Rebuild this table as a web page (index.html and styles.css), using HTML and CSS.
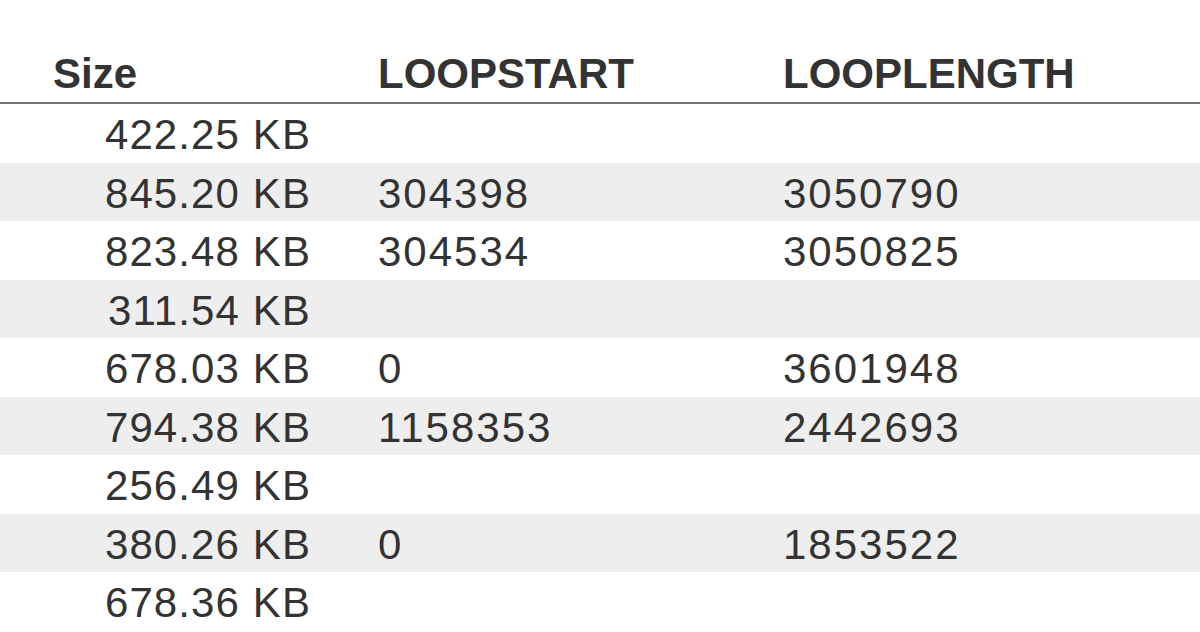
FILE: index.html
```html
<!DOCTYPE html>
<html>
<head>
<meta charset="utf-8">
<link rel="stylesheet" href="styles.css">
</head>
<body>
<div class="table">
  <div class="row head">
    <div class="cell c1">Size</div>
    <div class="cell c2">LOOPSTART</div>
    <div class="cell c3">LOOPLENGTH</div>
  </div>
  <div class="row"><div class="cell c1">422.25 KB</div><div class="cell c2"></div><div class="cell c3"></div></div>
  <div class="row alt"><div class="cell c1">845.20 KB</div><div class="cell c2">304398</div><div class="cell c3">3050790</div></div>
  <div class="row"><div class="cell c1">823.48 KB</div><div class="cell c2">304534</div><div class="cell c3">3050825</div></div>
  <div class="row alt"><div class="cell c1">311.54 KB</div><div class="cell c2"></div><div class="cell c3"></div></div>
  <div class="row"><div class="cell c1">678.03 KB</div><div class="cell c2">0</div><div class="cell c3">3601948</div></div>
  <div class="row alt"><div class="cell c1">794.38 KB</div><div class="cell c2">1158353</div><div class="cell c3">2442693</div></div>
  <div class="row"><div class="cell c1">256.49 KB</div><div class="cell c2"></div><div class="cell c3"></div></div>
  <div class="row alt"><div class="cell c1">380.26 KB</div><div class="cell c2">0</div><div class="cell c3">1853522</div></div>
  <div class="row"><div class="cell c1">678.36 KB</div><div class="cell c2"></div><div class="cell c3"></div></div>
</div>
</body>
</html>
```
FILE: styles.css
```css
html, body {
  margin: 0;
  padding: 0;
  background: #ffffff;
  overflow: hidden;
}
body {
  font-family: "Liberation Sans", Arial, sans-serif;
  color: #333333;
  font-size: 42px;
}
.table {
  display: flex;
  flex-direction: column;
  width: 1200px;
}
.row {
  display: grid;
  grid-template-columns: 378px 405px 1fr;
  height: 58.5px;
  line-height: 58.5px;
  padding-top: 2px;
  box-sizing: border-box;
}
.row.alt {
  background: #eeeeee;
}
.row.head {
  height: 104px;
  line-height: 1;
  padding-top: 0;
  border-bottom: 2px solid #727272;
  align-items: end;
}
.cell {
  white-space: nowrap;
}
.c1 {
  text-align: right;
  padding-right: 67px;
  letter-spacing: 1.1px;
}
.c2, .c3 {
  letter-spacing: 2px;
}
.head .cell {
  padding-bottom: 7.5px;
  font-weight: bold;
  letter-spacing: 0;
}
.head .c1 {
  text-align: left;
  padding-left: 53px;
  padding-right: 0;
}
```
